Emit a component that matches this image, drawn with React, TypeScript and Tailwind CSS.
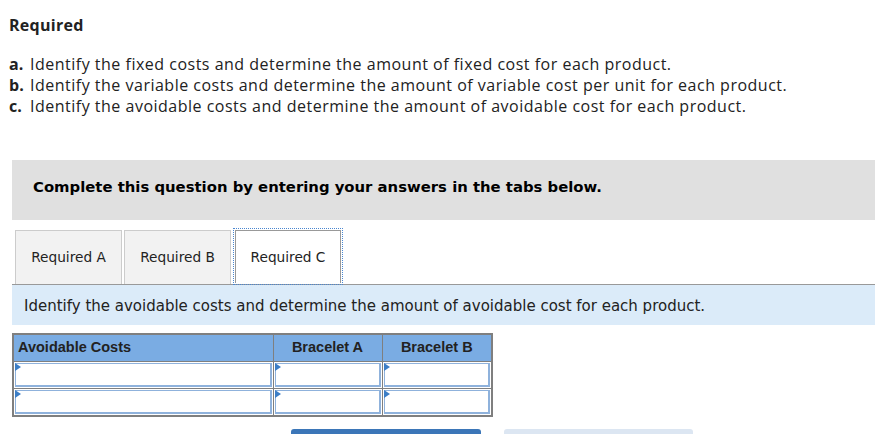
import React from "react";

const verdana = { fontFamily: '"DejaVu Sans", Verdana, sans-serif' };

function InputCell() {
  return (
    <td className="p-0 border border-[#7f7f7f] bg-white">
      <div className="relative h-[24px] m-[1px] border border-[#8fb2dc] border-b-2 border-r-2 bg-white">
        <svg className="absolute left-[-1px] top-[-1px]" width="6" height="8" viewBox="0 0 6 8">
          <polygon points="0,0 6,4 0,8" fill="#3c7ec6" />
        </svg>
      </div>
    </td>
  );
}

export default function App() {
  return (
    <div className="w-[875px] h-[434px] overflow-hidden bg-white text-[#222]">
      <div className="pt-[14px] pl-[9px]" style={{ fontFamily: '"Open Sans", sans-serif' }}>
        <div className="text-[16px] font-bold leading-[22px] tracking-[0.3px] text-[#222]">Required</div>
        <div className="mt-[18px] text-[16px] leading-[21px] tracking-[0.5px] text-[#222]">
          <div className="flex"><span className="w-[21px] font-bold tracking-normal">a.</span><span>Identify the fixed costs and determine the amount of fixed cost for each product.</span></div>
          <div className="flex"><span className="w-[21px] font-bold tracking-normal">b.</span><span>Identify the variable costs and determine the amount of variable cost per unit for each product.</span></div>
          <div className="flex"><span className="w-[21px] font-bold tracking-normal">c.</span><span>Identify the avoidable costs and determine the amount of avoidable cost for each product.</span></div>
        </div>
      </div>

      <div className="ml-[12px] mt-[43px] h-[60px] bg-[#e0e0e0] flex items-center pl-[21px] pb-[5px]" style={verdana}>
        <span className="text-[14.85px] font-bold text-black">Complete this question by entering your answers in the tabs below.</span>
      </div>

      <div className="ml-[12px] mt-[10px] flex items-end border-b border-[#999] h-[55px]" style={verdana}>
        <div className="ml-[3px] w-[107px] h-[54px] bg-[#f2f2f2] border border-b-0 border-[#ccc] flex items-center justify-center text-[13.7px] text-[#222]">Required A</div>
        <div className="ml-[2px] w-[107px] h-[54px] bg-[#f2f2f2] border border-b-0 border-[#ccc] flex items-center justify-center text-[13.7px] text-[#222]">Required B</div>
        <div className="ml-[2px] w-[110px] h-[57px] -mb-[1px] border border-dotted border-[#4a86d0] p-[1px]">
          <div className="h-full bg-white border border-b-0 border-[#999] flex items-center justify-center text-[13.7px] text-[#222]">Required C</div>
        </div>
      </div>

      <div className="ml-[12px] h-[40px] bg-[#dbebf9] flex items-center pl-[12px] pt-[3px]" style={verdana}>
        <span className="text-[15px] text-[#222]">Identify the avoidable costs and determine the amount of avoidable cost for each product.</span>
      </div>

      <table className="ml-[12px] mt-[8px] w-[479px] table-fixed border-collapse border-2 border-[#7f7f7f]" style={{ fontFamily: '"Liberation Sans", Arial, sans-serif' }}>
        <colgroup>
          <col className="w-[260px]" />
          <col className="w-[109px]" />
          <col className="w-[110px]" />
        </colgroup>
        <thead>
          <tr className="bg-[#7aace3] h-[27px]">
            <th className="border border-[#7f7f7f] text-left pl-[4px] text-[14.5px] font-bold text-[#222]">Avoidable Costs</th>
            <th className="border border-[#7f7f7f] text-center text-[14.5px] font-bold text-[#222]">Bracelet A</th>
            <th className="border border-[#7f7f7f] text-center text-[14.5px] font-bold text-[#222]">Bracelet B</th>
          </tr>
        </thead>
        <tbody>
          <tr>
            <InputCell />
            <InputCell />
            <InputCell />
          </tr>
          <tr>
            <InputCell />
            <InputCell />
            <InputCell />
          </tr>
        </tbody>
      </table>

      <div className="flex mt-[12px]">
        <div className="ml-[291px] w-[190px] h-[20px] rounded-t-[3px] bg-[#3b76b8]" />
        <div className="ml-[23px] w-[189px] h-[20px] rounded-t-[3px] bg-[#dce6f2]" />
      </div>
    </div>
  );
}
